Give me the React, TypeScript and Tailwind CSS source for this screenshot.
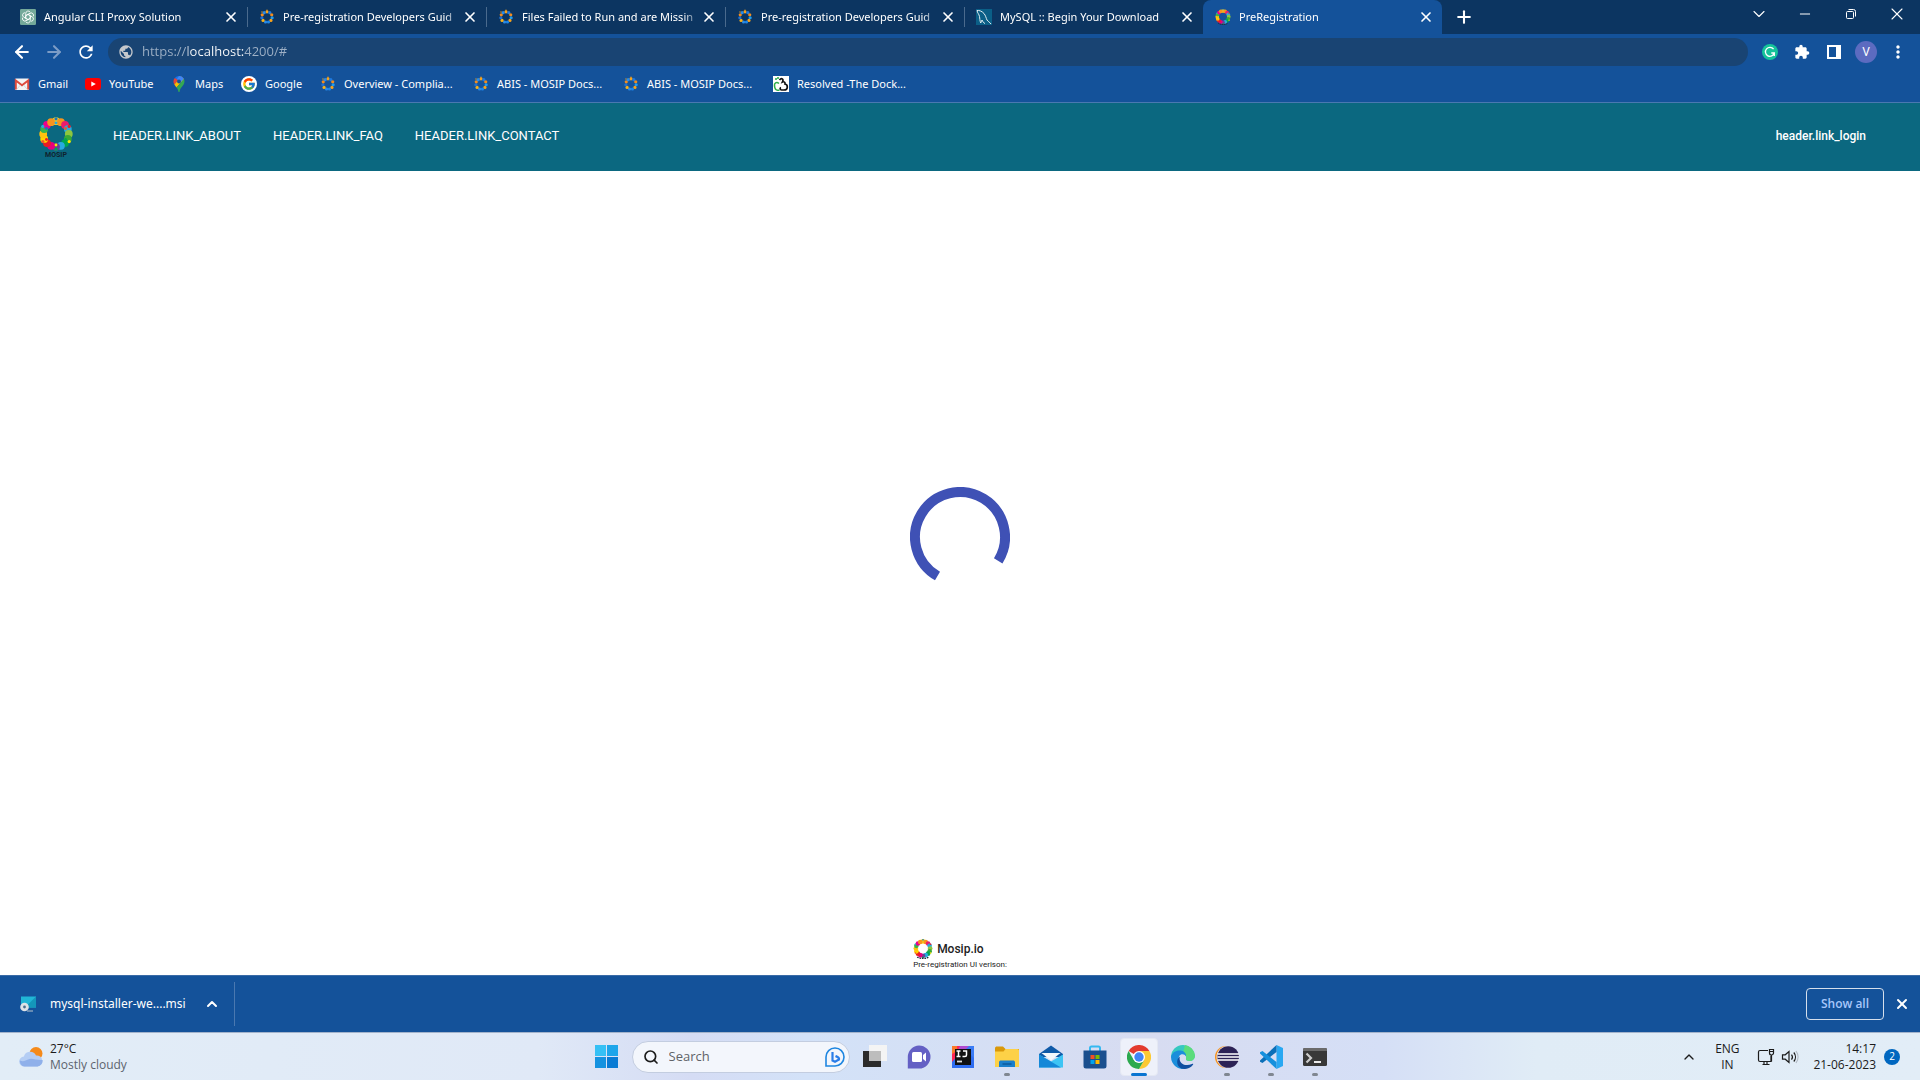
import { useState } from 'react';
import type { ReactNode } from 'react';
import { ArrowLeft, ArrowRight, ChevronDown, ChevronUp, Minus, Plus, Search, X } from 'lucide-react';
import { MdRefresh, MdPublic, MdExtension, MdMoreVert } from 'react-icons/md';
import { FcGoogle } from 'react-icons/fc';
import clsx from 'clsx';

interface IconProps {
  className?: string;
}

const RING_COLORS = ['#f9d71c', '#f7941e', '#ec1c6c', '#27aae1', '#8dc63f', '#39a935', '#00a651', '#27aae1', '#6a3f98', '#e6007e', '#ed1c24', '#ffd400', '#ffc20e', '#39b54a', '#ec008c', '#f7941e'];
const DOT_COLORS = ['#1c75bc', '#ed1c24', '#ffe600', '#00a651', '#f15a29', '#27aae1'];
const DOCS_COLORS = ['#f7a21b', '#1f7ae0', '#f28c1e', '#1d9bf0', '#f7a21b', '#1d86e8', '#2a8be8', '#f7b21b', '#1f6fd0', '#f28c1e', '#2a8be8'];

function ringDots(colors: string[], cx: number, cy: number, radius: number, size: number) {
  return colors.map((fill, i) => {
    const a = (i / colors.length) * Math.PI * 2 - Math.PI / 2;
    return <circle key={i} cx={cx + radius * Math.cos(a)} cy={cy + radius * Math.sin(a)} r={size} fill={fill} />;
  });
}

function MosipRing({ className }: IconProps) {
  return (
    <svg viewBox="0 0 24 24" className={className} aria-hidden="true">
      {ringDots(RING_COLORS, 12, 11.5, 8.6, 2.8)}
      {ringDots(DOT_COLORS, 12, 11.5, 10.5, 1)}
      <path d="M5 21.500c4 2.500 10 2.500 14 0" stroke="#1d2a3a" strokeWidth="1.500" strokeDasharray="2 1" fill="none" />
    </svg>
  );
}

function DocsIcon({ className }: IconProps) {
  return (
    <svg viewBox="0 0 24 24" className={className} aria-hidden="true">
      {ringDots(DOCS_COLORS, 12, 12, 7.8, 2.4)}
      <circle cx="12" cy="1.800" r="1" fill="#f7a21b" />
      <circle cx="4.500" cy="4.500" r="1" fill="#f7a21b" />
    </svg>
  );
}

function ChatGptIcon({ className }: IconProps) {
  return (
    <svg viewBox="0 0 24 24" className={className} aria-hidden="true">
      <rect width="24" height="24" rx="2" fill="#74a99a" />
      <g fill="none" stroke="#fff" strokeWidth="1.300">
        {[0, 60, 120, 180, 240, 300].map((deg) => (
          <path key={deg} d="M8.600 10V6.600a3.600 3.600 0 0 1 6.600-1.900M8.600 10v4l3.400 2" transform={`rotate(${deg} 12 12)`} />
        ))}
      </g>
    </svg>
  );
}

function MysqlIcon({ className }: IconProps) {
  return (
    <svg viewBox="0 0 16 16" className={className} aria-hidden="true">
      <rect width="16" height="16" fill="#0b5f87" />
      <path d="M1 1.500c2-.4 5 .7 7 3 1.700 2 2 4.500 3 6.500 1 1.500 2.500 2 4 4M1 1.500c.4 2.500 2 3.500 2.500 6 .4 2 .2 4 1.200 6.500.6-1 1-2 1.300-3 .7 1.500 1.600 3 3 3.500" fill="none" stroke="#e3eef3" />
    </svg>
  );
}

function GmailIcon({ className }: IconProps) {
  return (
    <svg viewBox="0 0 16 16" className={className} aria-hidden="true">
      <rect x="1" y="2.500" width="14" height="11.500" rx="1" fill="#f4f4f4" />
      <path d="M1.800 13.500V4.500L8 9.200l6.200-4.700v9" fill="none" stroke="#dd4b3e" strokeWidth="2" />
      <path d="m3 13 3.500-4M13 13 9.500 9" stroke="#d8d8d8" />
    </svg>
  );
}

function YoutubeIcon({ className }: IconProps) {
  return (
    <svg viewBox="0 0 16 16" className={className} aria-hidden="true">
      <rect y="2" width="16" height="12" rx="3" fill="#f00" />
      <path d="M6.300 5.400v5.200L10.800 8z" fill="#fff" />
    </svg>
  );
}

function MapsIcon({ className }: IconProps) {
  return (
    <svg viewBox="0 0 16 16" className={className} aria-hidden="true">
      <path d="M8 0a5.500 5.500 0 0 0-4.200 2L6 4.200 10.500.6A5.500 5.500 0 0 0 8 0z" fill="#1a73e8" />
      <path d="M3.800 2C2 4 2.200 6.500 3.300 8.400L7 4z" fill="#ea4335" />
      <path d="M10.300.6 13 3.300 5.500 11.500 3.300 8.400z" fill="#fbbc04" />
      <path d="M8 0a5.500 5.500 0 0 1 4.900 3.100L9 7 6 3z" fill="#4285f4" />
      <path d="M12.900 3.100c1.300 2.600.3 4.800-1 6.500C9.700 12.300 9 13 8.500 16h-1c-.3-2-.9-3.100-2-4.500z" fill="#34a853" />
      <circle cx="8" cy="5.500" r="1.900" fill="#14529a" />
    </svg>
  );
}

function GoogleIcon() {
  return (
    <span className="flex size-4 items-center justify-center rounded-full bg-white">
      <FcGoogle className="size-3.5" />
    </span>
  );
}

function DockIcon({ className }: IconProps) {
  return (
    <svg viewBox="0 0 16 16" className={className} aria-hidden="true">
      <rect width="16" height="16" fill="#fff" />
      <path d="M6 7.500C3.500 5.500 1 7 1.500 10c.3 2.500 1 4.200 3 4.200h2M3 2v2M5 1v2" fill="none" stroke="#2fae4a" strokeWidth="1.600" />
      <path d="M6.500 4C8.500 1.500 11 3 9.500 6c1.500-.7 3 .3 2.500 2 3 .5 3.500 6-1 6H8.500c-1.500 0-2-2-.5-2.500" fill="none" stroke="#111" strokeWidth="1.700" />
    </svg>
  );
}

interface BrowserTab {
  title: string;
  icon: ReactNode;
}

const TABS: BrowserTab[] = [
  { title: 'Angular CLI Proxy Solution', icon: <ChatGptIcon className="size-4" /> },
  { title: 'Pre-registration Developers Guid', icon: <DocsIcon className="size-4" /> },
  { title: 'Files Failed to Run and are Missin', icon: <DocsIcon className="size-4" /> },
  { title: 'Pre-registration Developers Guid', icon: <DocsIcon className="size-4" /> },
  { title: 'MySQL :: Begin Your Download', icon: <MysqlIcon className="size-4" /> },
  { title: 'PreRegistration', icon: <MosipRing className="size-4" /> },
];

const BOOKMARKS = [
  { label: 'Gmail', width: 'w-[71px]', icon: <GmailIcon className="size-4" /> },
  { label: 'YouTube', width: 'w-[86px]', icon: <YoutubeIcon className="size-4" /> },
  { label: 'Maps', width: 'w-[70px]', icon: <MapsIcon className="size-4" /> },
  { label: 'Google', width: 'w-[79px]', icon: <GoogleIcon /> },
  { label: 'Overview - Complia...', width: 'w-[153px]', icon: <DocsIcon className="size-4" /> },
  { label: 'ABIS - MOSIP Docs...', width: 'w-[150px]', icon: <DocsIcon className="size-4" /> },
  { label: 'ABIS - MOSIP Docs...', width: 'w-[150px]', icon: <DocsIcon className="size-4" /> },
  { label: 'Resolved -The Dock...', width: 'w-[150px]', icon: <DockIcon className="size-4" /> },
];

function TabStrip() {
  const [active, setActive] = useState(5);
  return (
    <div className="flex h-[34px] items-stretch bg-[#0c3561] pl-2 font-['Noto_Sans','Open_Sans',sans-serif] text-[11px]">
      {TABS.map((tab, i) => (
        <div
          key={i}
          className={clsx('flex w-[239px] shrink items-center', i === active ? 'rounded-t-lg bg-[#14529a]' : 'bg-[#0c3561]')}
        >
          <span className={clsx('h-5 w-px', i === 0 || i === active || i === active + 1 ? 'bg-transparent' : 'bg-[#4a6a8d]')} />
          <button type="button" onClick={() => setActive(i)} className="flex min-w-0 flex-1 items-center gap-2 pl-[11px] text-left text-white">
            <span className="shrink-0">{tab.icon}</span>
            <span className="min-w-0 flex-1 overflow-hidden whitespace-nowrap mask-r-from-90%">{tab.title}</span>
          </button>
          <button type="button" aria-label="Close tab" className="mr-2 flex size-4 shrink-0 items-center justify-center text-white">
            <X className="size-4" strokeWidth={2.5} />
          </button>
        </div>
      ))}
      <button type="button" aria-label="New tab" className="flex w-11 items-center justify-center text-white">
        <Plus className="size-5" strokeWidth={2.5} />
      </button>
      <div className="ml-auto flex h-7 text-white">
        <button type="button" aria-label="Search tabs" className="flex w-[46px] items-center justify-center">
          <ChevronDown className="size-5" strokeWidth={1.3} />
        </button>
        <button type="button" aria-label="Minimize" className="flex w-[46px] items-center justify-center">
          <Minus className="size-4" strokeWidth={1.5} />
        </button>
        <button type="button" aria-label="Restore" className="flex w-[46px] items-center justify-center">
          <svg viewBox="0 0 10 10" className="size-2.5" fill="none" stroke="currentColor">
            <rect x="0.500" y="2.500" width="7" height="7" rx="1" />
            <path d="M2.500.5H7.500a2 2 0 0 1 2 2V7.500" />
          </svg>
        </button>
        <button type="button" aria-label="Close" className="flex w-[46px] items-center justify-center">
          <X className="size-5" strokeWidth={1.3} />
        </button>
      </div>
    </div>
  );
}

function Toolbar() {
  const [url, setUrl] = useState('https://localhost:4200/#');
  return (
    <div className="flex h-9 items-center gap-1.5 bg-[#14529a] px-1.5 text-white">
      <div className="flex">
        <button type="button" aria-label="Back" className="flex w-8 justify-center">
          <ArrowLeft className="size-5" strokeWidth={2.5} />
        </button>
        <button type="button" aria-label="Forward" className="flex w-8 justify-center text-[#7c9cc6]">
          <ArrowRight className="size-5" strokeWidth={2.5} />
        </button>
        <button type="button" aria-label="Reload" className="flex w-8 justify-center">
          <MdRefresh className="size-5" />
        </button>
      </div>
      <div className="flex h-7 flex-1 items-center gap-2 rounded-full bg-[#194473] pl-2.5">
        <MdPublic className="size-4 text-[#c5c8cc]" />
        <input
          aria-label="Address"
          value={url}
          onChange={(e) => setUrl(e.target.value)}
          className="flex-1 bg-[linear-gradient(to_right,#9fb1c6_0_46px,#ffffff_46px_102px,#9fb1c6_102px)] bg-clip-text text-[13px] text-transparent outline-none"
        />
      </div>
      <div className="flex items-center">
        <button type="button" aria-label="Grammarly" className="flex w-8 justify-center">
          <svg viewBox="0 0 16 16" className="size-4" fill="none">
            <circle cx="8" cy="8" r="8" fill="#15c39a" />
            <path d="M11.600 5.200A4.500 4.500 0 1 0 12.300 9H9.300M12.300 8.500V12" stroke="#fff" strokeWidth="1.300" />
          </svg>
        </button>
        <button type="button" aria-label="Extensions" className="flex w-8 justify-center">
          <MdExtension className="size-4" />
        </button>
        <button type="button" aria-label="Side panel" className="flex w-8 justify-center">
          <svg viewBox="0 0 14 14" className="size-3.5">
            <path d="M0 0h14v14H0zM2 2v10h7V2z" fill="currentColor" fillRule="evenodd" />
          </svg>
        </button>
        <button type="button" aria-label="Profile" className="flex w-8 justify-center">
          <span className="flex size-[22px] items-center justify-center rounded-full bg-[#5c6bc0] font-[Roboto,sans-serif] text-[12px]">V</span>
        </button>
        <button type="button" aria-label="Menu" className="flex w-8 justify-center">
          <MdMoreVert className="size-5" />
        </button>
      </div>
    </div>
  );
}

function BookmarksBar() {
  return (
    <nav aria-label="Bookmarks" className="flex h-[33px] items-center border-b border-[#4a78b0] bg-[#14529a] pb-1 pl-3.5 font-['Noto_Sans','Open_Sans',sans-serif] text-[11px] text-white">
      {BOOKMARKS.map((b, i) => (
        <a key={i} href="#" className={clsx('flex items-center gap-2 whitespace-nowrap', b.width)}>
          <span className="shrink-0">{b.icon}</span>
          {b.label}
        </a>
      ))}
    </nav>
  );
}

function SiteHeader() {
  return (
    <header className="flex h-[68px] items-center bg-[#0b6880] pr-[54px] pl-[38px] font-[Roboto,sans-serif] text-white">
      <a href="#" aria-label="Home" className="mr-[39px]">
        <svg viewBox="0 0 36 42" className="h-[42px] w-9">
          {ringDots(RING_COLORS, 18, 18, 12.8, 3.9)}
          {ringDots(DOT_COLORS, 18, 18, 15.2, 1.6)}
          {ringDots(DOT_COLORS.slice().reverse(), 18, 18, 11, 1.4)}
          <text x="18" y="41" textAnchor="middle" fontSize="7" fontWeight="700" fill="#10222c">MOSIP</text>
        </svg>
      </a>
      <nav className="flex gap-8 pb-0.5 text-[13px]">
        <a href="#">HEADER.LINK_ABOUT</a>
        <a href="#">HEADER.LINK_FAQ</a>
        <a href="#">HEADER.LINK_CONTACT</a>
      </nav>
      <a href="#" className="ml-auto pb-0.5 text-[12px] font-medium">header.link_login</a>
    </header>
  );
}

function SiteFooter() {
  return (
    <footer className="flex h-[72px] flex-col items-center justify-end pb-1 font-[Roboto,sans-serif] text-[#222]">
      <div>
        <div className="flex items-center gap-1 text-[12px] leading-5 font-medium">
          <MosipRing className="size-5" />
          Mosip.io
        </div>
        <p className="text-[8px] leading-3">Pre-registration UI verison:</p>
      </div>
    </footer>
  );
}

function DownloadBar() {
  return (
    <div className="flex h-[57px] items-center border-t border-[#3a6ba6] bg-[#14529a] pr-2.5 pl-5 text-white">
      <button type="button" className="flex items-center gap-3.5 font-['Noto_Sans','Open_Sans',sans-serif] text-[12px]">
        <svg viewBox="0 0 16 16" className="size-4" aria-hidden="true">
          <rect x="1" y="0.500" width="15" height="11" fill="#21b6d6" />
          <path d="M16 .5v11H5z" fill="#1496ba" />
          <path d="M7 14.500h6v1H7z" fill="#b9c4cc" />
          <circle cx="4.500" cy="11" r="4.300" fill="#dfe3e6" />
          <circle cx="4.500" cy="11" r="1.400" fill="#4a6f8f" />
        </svg>
        mysql-installer-we....msi
      </button>
      <button type="button" aria-label="Download options" className="ml-4 flex w-5 justify-center">
        <ChevronUp className="size-4" strokeWidth={3} />
      </button>
      <span className="ml-3 h-11 w-px bg-[#4a78b0]" />
      <button type="button" className="ml-auto h-8 w-[78px] rounded border border-[#d5dfec] text-[12px] font-semibold text-[#a8c7fa]">
        Show all
      </button>
      <button type="button" aria-label="Close downloads" className="ml-2.5 flex w-4 justify-center">
        <X className="size-4" strokeWidth={3} />
      </button>
    </div>
  );
}

interface TaskbarApp {
  name: string;
  running?: boolean;
  active?: boolean;
  icon: ReactNode;
}

const APPS: TaskbarApp[] = [
  {
    name: 'Task view',
    icon: (
      <>
        <rect y="6" width="18" height="16" fill="#2b2b2b" />
        <rect x="6" width="18" height="16" fill="#f4f4f4" />
        <rect x="6" y="6" width="12" height="10" fill="#bdbdbd" />
      </>
    ),
  },
  {
    name: 'Chat',
    icon: (
      <>
        <path d="M12 .5a11.500 11.500 0 1 1 0 23H.8V12A11.500 11.500 0 0 1 12 .5z" fill="#6460c4" />
        <rect x="5" y="7" width="10" height="10" rx="1.500" fill="#fff" />
        <path d="m16 10 3-2.500v9L16 14z" fill="#fff" />
      </>
    ),
  },
  {
    name: 'IntelliJ IDEA',
    icon: (
      <>
        <path d="M1 11v12h22V11L11 1z" fill="#2f6df0" />
        <path d="M1 1h14L1 17z" fill="#fe2857" />
        <path d="M11 1h12v12z" fill="#3a7bf5" />
        <path d="M1 1h5v5L1 9z" fill="#f97a2a" />
        <path d="M9 1h9l-4 4H7z" fill="#b04bd0" />
        <rect x="4" y="4" width="16" height="16" fill="#111" />
        <path d="M5.500 6h4M7.500 6v5.500M5.500 11.500h4M12 6h3.500v4c0 1-.8 1.500-1.500 1.500h-2.500" stroke="#fff" strokeWidth="1.500" fill="none" />
        <path d="M6 16.500h5" stroke="#ddd" strokeWidth="1.800" />
      </>
    ),
  },
  {
    name: 'File Explorer',
    running: true,
    icon: (
      <>
        <path d="M0 3.500C0 2 .8 1.500 2 1.500h6l2.500 2.500H24V8H0z" fill="#d9980a" />
        <path d="M0 6.500h8.500l2-2.500H22.500A1.500 1.500 0 0 1 24 5.500V22H0z" fill="#fdd147" />
        <path d="M4 22v-4.500C4 16 5 15.500 6 15.500h12c1 0 2 .5 2 2V22z" fill="#1a7fcb" />
        <path d="M7.500 19h9" stroke="#0c5a9c" strokeWidth="1.500" />
      </>
    ),
  },
  {
    name: 'Mail',
    icon: (
      <>
        <path d="M0 9 12 .5 24 9v3H0z" fill="#0f5aa8" />
        <path d="M2.500 8h19L12 15.500z" fill="#f3f7fb" />
        <path d="M0 9.500 12 16.500 24 9.500V22.500H0z" fill="#3dc4f4" />
        <path d="M0 9.500 22 22.500H0z" fill="#1488d8" />
      </>
    ),
  },
  {
    name: 'Microsoft Store',
    icon: (
      <>
        <path d="M7 6V3a1.500 1.500 0 0 1 1.500-1.500h7A1.500 1.500 0 0 1 17 3v3" fill="none" stroke="#35b9f1" strokeWidth="2" />
        <path d="M.5 5.500h23V21a2.500 2.500 0 0 1-2.500 2.500H3A2.500 2.500 0 0 1 .5 21z" fill="#1a4f8e" />
        <path d="M7.500 10h4v4h-4z" fill="#f25022" />
        <path d="M12.500 10h4v4h-4z" fill="#7fba00" />
        <path d="M7.500 15h4v4h-4z" fill="#00a4ef" />
        <path d="M12.500 15h4v4h-4z" fill="#ffb900" />
      </>
    ),
  },
  {
    name: 'Google Chrome',
    running: true,
    active: true,
    icon: (
      <>
        <path d="M12 12 1.600 6A12 12 0 0 1 22.400 6z" fill="#e33b2e" />
        <path d="M12 6h10.400A12 12 0 0 1 12 24l5.200-9z" fill="#fcc934" />
        <path d="M1.600 6 6.800 15l5.200 3 5.200-3L12 24A12 12 0 0 1 1.600 6z" fill="#2da94f" />
        <circle cx="12" cy="12" r="6" fill="#fff" />
        <circle cx="12" cy="12" r="4.700" fill="#4285f4" />
      </>
    ),
  },
  {
    name: 'Microsoft Edge',
    icon: (
      <>
        <path d="M12 0a12 12 0 0 1 12 10.500c0 3.500-2.500 5.500-5.500 5.500-2.500 0-4-1-3.500-2.500 1-3-1.500-5.500-5-5.500C5 8 1 11 0 13A12 12 0 0 1 12 0z" fill="#36c8c0" />
        <path d="M14 0a12 12 0 0 1 10 10.500c0 3.500-2.500 5.500-5.500 5.500-2.500 0-4-1-3.500-2.500.8-3-1-5-3-5.500z" fill="#5bdc7c" />
        <path d="M0 12c1-5 5.500-7 9.500-6.500 3.500.4 6 3 5.500 6-1-2-3-2.800-5-2C6.500 11 7 17 11 20c1.500 1.500 3 2.500 4 3.500A12 12 0 0 1 0 12z" fill="#1b8edb" />
        <path d="M9 11.500c-2 5.500 4 11 12 7.500 1-.4 1.500 0 1 .7-3 4-8 5-11.500 3.800C5 21 5 14 9 11.500z" fill="#0f4fa0" />
      </>
    ),
  },
  {
    name: 'Eclipse',
    running: true,
    icon: (
      <>
        <circle cx="11" cy="12" r="11" fill="#f7941e" />
        <circle cx="12.500" cy="12" r="11" fill="#e8e4f0" />
        <circle cx="13.200" cy="12" r="10.800" fill="#2c2255" />
        <path d="M2.500 9h21.500M2.500 12h21.500M2.500 15h21.500" stroke="#fff" strokeWidth="1.500" />
      </>
    ),
  },
  {
    name: 'Visual Studio Code',
    running: true,
    icon: (
      <>
        <path d="M17.500 0 24 3v18l-6.500 3z" fill="#29a8f2" />
        <path d="M1 15.500 17.500 0v7L3.500 18 1 16.800z" fill="#0b6fb8" />
        <path d="M1 8.500 17.500 24v-7L3.500 6 1 7.200z" fill="#1590dd" />
      </>
    ),
  },
  {
    name: 'Terminal',
    running: true,
    icon: (
      <>
        <rect y="3" width="24" height="18" rx="1.500" fill="#383838" />
        <path d="M0 4.500A1.500 1.500 0 0 1 1.500 3h21A1.500 1.500 0 0 1 24 4.500V6H0z" fill="#6b6b6b" />
        <path d="m3.500 8.500 4.500 4.500-4.500 4.500" fill="none" stroke="#ccc" strokeWidth="2.200" />
        <path d="M11 17h7" stroke="#fff" strokeWidth="1.800" />
      </>
    ),
  },
];

function Taskbar() {
  return (
    <div className="grid h-12 grid-cols-[1fr_auto_1fr] items-center border-t border-[#a3b3cb] bg-[linear-gradient(to_right,#e2edf7,#e0e9f7_28%,#d5dcf4_36%,#d3e2f8_42%,#d7dcf1_60%,#d5dff6_72%,#e0ecf6_80%,#e2edf7)] text-[#1b1b1b]">
      <button type="button" className="flex items-center gap-[7px] pl-[19px] text-left leading-4">
        <svg viewBox="0 0 24 22" className="h-[22px] w-6" aria-hidden="true">
          <circle cx="17" cy="7.500" r="6.500" fill="#f58a1a" />
          <path d="M5.500 20.500a5 5 0 0 1-.6-10A6.500 6.500 0 0 1 17 9.500a5.500 5.500 0 0 1 1.500 11z" fill="#b4cdf4" />
          <path d="M5.500 20.500a5 5 0 0 1-4.500-6c3 1.500 6 0 8-1 4-2 8 1 14.500.5a5.500 5.500 0 0 1-5 6.500z" fill="#8fb0ea" />
        </svg>
        <span>
          <span className="block">27°C</span>
          <span className="block text-[#5c646e]">Mostly cloudy</span>
        </span>
      </button>

      <div className="flex items-center">
        <button type="button" aria-label="Start" className="flex w-12 justify-center pr-0.5">
          <svg viewBox="0 0 23 23" className="size-[23px]">
            <path d="M0 0h11v11H0z" fill="#35c0f5" />
            <path d="M12 0h11v11H12z" fill="#1ea5ea" />
            <path d="M0 12h11v11H0z" fill="#1592e0" />
            <path d="M12 12h11v11H12z" fill="#0a7bd4" />
          </svg>
        </button>
        <label className="flex h-8 w-[218px] items-center gap-2.5 rounded-full border border-[#c3cde0] bg-[#f3f6fc] pr-1 pl-2.5">
          <Search className="size-4" strokeWidth={2.5} />
          <input aria-label="Search" placeholder="Search" className="min-w-0 flex-1 text-[13px] outline-none placeholder:text-[#5f6368]" />
          <svg viewBox="0 0 20 20" className="size-5 shrink-0" fill="none">
            <path d="M10 1a9 9 0 1 1 0 18H1v-9a9 9 0 0 1 9-9z" stroke="#1e86e0" strokeWidth="1.600" />
            <path d="M7.500 5v8.500l2.500 1.300 4-2.300c.5-2-1-2.500-3.500-3.500" stroke="#2a7de8" strokeWidth="2.200" />
          </svg>
        </label>
        <div className="ml-[3px] flex">
          {APPS.map((app) => (
            <div key={app.name} className="flex w-11 justify-center">
              <button
                type="button"
                aria-label={app.name}
                className={clsx('flex h-[38px] w-[38px] flex-col items-center rounded border pt-1.5', app.active ? 'border-[#e4e8f3] bg-[#eef1fa]' : 'border-transparent')}
              >
                <svg viewBox="0 0 24 24" className="size-6 shrink-0">
                  {app.icon}
                </svg>
                {app.running && (
                  <span className={clsx('mt-1 h-[3px] shrink-0 rounded-full', app.active ? 'w-4 bg-[#0a75d1]' : 'w-1.5 bg-[#808791]')} />
                )}
              </button>
            </div>
          ))}
        </div>
      </div>

      <div className="flex items-center justify-end pr-5">
        <button type="button" aria-label="Hidden icons" className="flex w-8 justify-center">
          <ChevronUp className="size-4" strokeWidth={2} />
        </button>
        <button type="button" className="w-11 text-center leading-4">
          ENG
          <br />
          IN
        </button>
        <button type="button" aria-label="Network and volume" className="ml-2 flex items-center gap-1.5">
          <svg viewBox="0 0 18 18" className="size-[18px]" fill="none" stroke="currentColor" strokeWidth="1.200">
            <path d="M11 2.500H3A1.500 1.500 0 0 0 1.500 4v8A1.500 1.500 0 0 0 3 13.500h11V8M5.500 16.500h7M7 13.500v3M10 13.500v3" />
            <path d="M12.500 1.500h4V5a2 2 0 0 1-4 0zM14.500 7v6.500M12.500 3.500h4" />
          </svg>
          <svg viewBox="0 0 18 18" className="size-[18px]" fill="none" stroke="currentColor" strokeWidth="1.200">
            <path d="M1.500 6.800v4.400h2.700L8 14.500v-11L4.200 6.800z" />
            <path d="M10.500 6.500a4 4 0 0 1 0 5M12.800 4.500a7 7 0 0 1 0 9" />
            <path d="M15 3a10 10 0 0 1 0 12" stroke="#b0b8c2" />
          </svg>
        </button>
        <button type="button" className="ml-3.5 text-right leading-4">
          14:17
          <br />
          21-06-2023
        </button>
        <button type="button" aria-label="Notifications" className="ml-2 flex size-4 items-center justify-center rounded-full bg-[#0067c0] text-[10px] text-white">
          2
        </button>
      </div>
    </div>
  );
}

export default function App() {
  return (
    <div className="flex min-h-screen flex-col bg-white font-['Open_Sans','Noto_Sans',sans-serif] text-[12px]">
      <TabStrip />
      <Toolbar />
      <BookmarksBar />
      <SiteHeader />
      <main className="flex flex-1 items-center justify-center">
        <svg viewBox="0 0 100 100" className="size-[100px]" role="img" aria-label="Loading">
          <path d="M27.500 89A45 45 0 1 1 88.200 73.800" fill="none" stroke="#3f51b5" strokeWidth="10" />
        </svg>
      </main>
      <SiteFooter />
      <DownloadBar />
      <Taskbar />
    </div>
  );
}
